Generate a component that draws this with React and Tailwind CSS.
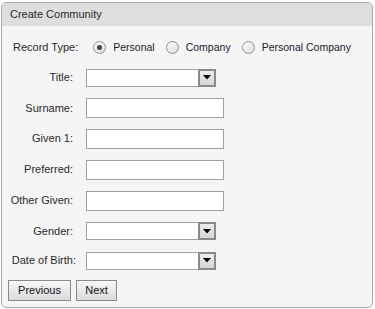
import React from "react";

function Radio({ checked }) {
  return (
    <span className="w-[13px] h-[13px] rounded-full border border-[#8f8f8f] bg-gradient-to-br from-[#fdfdfd] to-[#dcdcdc] flex items-center justify-center shrink-0">
      {checked && <span className="w-[5px] h-[5px] rounded-full bg-[#444]" />}
    </span>
  );
}

function TextBox() {
  return <div className="w-[138px] h-[20px] border border-[#a0a0a0] bg-white" />;
}

function Select() {
  return (
    <div className="w-[130px] h-[18px] border border-[#a0a0a0] bg-white flex justify-end">
      <div className="w-[18px] h-[18px] -mt-px -mr-px border-2 border-[#8a8a8a] bg-gradient-to-b from-[#ececec] to-[#d6d6d6] flex items-center justify-center">
        <svg width="8" height="5" viewBox="0 0 8 5">
          <path d="M0 0 H8 L4 4.5 Z" fill="#000" />
        </svg>
      </div>
    </div>
  );
}

function Row({ label, h, wide, children }) {
  return (
    <div className={`flex items-center ${h}`}>
      <div className={`w-[74px] text-right text-[11px] text-[#2a2a2a] leading-none whitespace-nowrap ${wide ? "pr-0" : "pr-[3px]"}`}>{label}</div>
      <div className="ml-[10px]">{children}</div>
    </div>
  );
}

export default function App() {
  return (
    <div className="w-[375px] h-[309px] bg-white pt-[2px] pl-[1px] pr-[2px] pb-[1px]" style={{ fontFamily: '"Liberation Sans", Arial, sans-serif' }}>
      <div className="h-full border border-[#a8a8a8] rounded-[5px] bg-[#f5f5f5] overflow-hidden flex flex-col">
        <div className="h-[23px] bg-[#dedede] flex items-center pl-[8px] text-[11px] text-[#2a2a2a]">
          Create Community
        </div>
        <div className="pt-[6px] flex flex-col">
          <div className="h-[30px] flex items-center text-[11px] leading-none">
            <span className="ml-[11px] text-[#2a2a2a]">Record Type:</span>
            <span className="ml-[15px]"><Radio checked /></span>
            <span className="ml-[7px] text-[10.5px] text-[#1a1a2e]">Personal</span>
            <span className="ml-[11px]"><Radio /></span>
            <span className="ml-[7px] text-[10.5px] text-[#1a1a2e]">Company</span>
            <span className="ml-[11px]"><Radio /></span>
            <span className="ml-[7px] text-[10.5px] text-[#1a1a2e]">Personal Company</span>
          </div>
          <Row label="Title:" h="h-[31px]"><Select /></Row>
          <Row label="Surname:" h="h-[30px]"><TextBox /></Row>
          <Row label="Given 1:" h="h-[31px]"><TextBox /></Row>
          <Row label="Preferred:" h="h-[31px]"><TextBox /></Row>
          <Row label="Other Given:" h="h-[31px]"><TextBox /></Row>
          <Row label="Gender:" h="h-[30px]"><Select /></Row>
          <Row label="Date of Birth:" h="h-[29px]" wide><Select /></Row>
          <div className="mt-[5px] flex gap-[5px] pl-[6px]">
            <button className="w-[63px] h-[21px] border border-[#8a8a8a] bg-gradient-to-b from-[#f8f8f8] to-[#dadada] text-[11px] text-[#111] leading-none">Previous</button>
            <button className="w-[41px] h-[21px] border border-[#8a8a8a] bg-gradient-to-b from-[#f8f8f8] to-[#dadada] text-[11px] text-[#111] leading-none">Next</button>
          </div>
        </div>
      </div>
    </div>
  );
}
